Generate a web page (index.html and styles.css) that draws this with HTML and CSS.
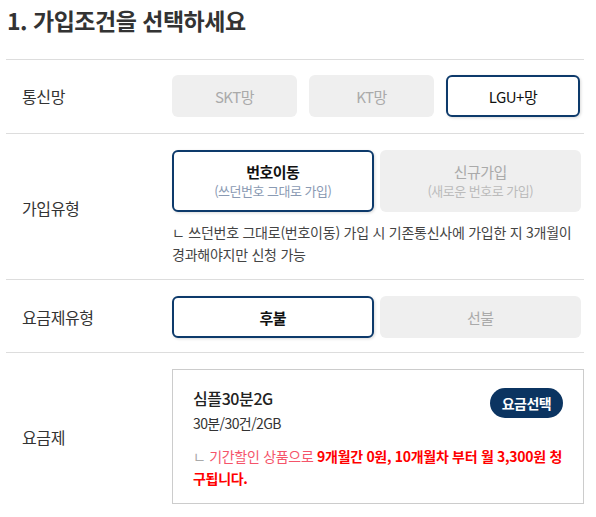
FILE: index.html
```html
<!DOCTYPE html>
<html lang="ko">
<head>
<meta charset="utf-8">
<link rel="stylesheet" href="styles.css">
</head>
<body>
<div class="wrap">
  <h1 class="title">1. 가입조건을 선택하세요</h1>
  <div class="row row-net">
    <div class="label">통신망</div>
    <div class="opts three">
      <div class="btn off">SKT망</div>
      <div class="btn off">KT망</div>
      <div class="btn on">LGU+망</div>
    </div>
  </div>
  <div class="row row-join">
    <div class="label">가입유형</div>
    <div class="col">
      <div class="opts two">
        <div class="btn tall on"><span class="main">번호이동</span><span class="sub">(쓰던번호 그대로 가입)</span></div>
        <div class="btn tall off"><span class="main">신규가입</span><span class="sub">(새로운 번호로 가입)</span></div>
      </div>
      <p class="note">ㄴ 쓰던번호 그대로(번호이동) 가입 시 기존통신사에 가입한 지 3개월이 경과해야지만 신청 가능</p>
    </div>
  </div>
  <div class="row row-type">
    <div class="label">요금제유형</div>
    <div class="opts two">
      <div class="btn on strong">후불</div>
      <div class="btn off">선불</div>
    </div>
  </div>
  <div class="row row-plan">
    <div class="label">요금제</div>
    <div class="card">
      <div class="card-head">
        <div>
          <div class="plan-name">심플30분2G</div>
          <div class="plan-spec">30분/30건/2GB</div>
        </div>
        <div class="pick">요금선택</div>
      </div>
      <p class="promo"><span class="mark">ㄴ </span><span class="soft">기간할인 상품으로 </span><b>9개월간 0원, 10개월차 부터 월 3,300원 청구됩니다.</b></p>
    </div>
  </div>
</div>
</body>
</html>
```

FILE: styles.css
```css
* { box-sizing: border-box; }
html, body { margin: 0; padding: 0; background: #fff; }
body {
  font-family: "Noto Sans CJK KR", "Noto Sans", sans-serif;
  color: #333;
}
.wrap { padding: 0 6px; width: 590px; }
.title {
  margin: 0;
  padding: 4px 0 0 1px;
  height: 59px;
  font-size: 23px;
  font-weight: 700;
  color: #333;
  letter-spacing: -0.5px;
  line-height: 32px;
}
.row {
  display: flex;
  align-items: center;
  border-top: 1px solid #ddd;
}
.label {
  width: 166px;
  flex: none;
  padding-left: 16px;
  font-size: 16px;
  color: #333;
  letter-spacing: -0.4px;
}
.row-net { padding: 15px 0 16px; }
.row-join { padding: 16px 0 14px; }
.row-type { padding: 16px 0 14px; }
.row-plan { padding: 16px 0 14px; }
.opts { display: grid; width: 409px; }
.three { grid-template-columns: 125px 125px 134px; column-gap: 12px; }
.two { grid-template-columns: 1fr 1fr; column-gap: 6px; }
.col { width: 409px; }
.btn {
  height: 42px;
  border-radius: 6px;
  display: flex;
  flex-direction: column;
  align-items: center;
  justify-content: center;
  font-size: 15px;
  letter-spacing: -0.5px;
}
.btn.off { background: #efefef; color: #aaa; }
.btn.on {
  background: #fff;
  border: 2px solid #0d3a6b;
  color: #111;
  box-shadow: 1px 1px 3px rgba(0,0,0,0.15);
}
.btn.strong { font-weight: 700; }
.btn.tall { height: 62px; }
.btn .main { font-size: 15px; line-height: 20px; }
.btn .sub { font-size: 13px; line-height: 18px; }
.btn.on .main { font-weight: 700; color: #111; }
.btn.on .sub { color: #8a9ab3; }
.btn.off .sub { color: #bbb; }
.note {
  margin: 9px 0 0;
  font-size: 14px;
  line-height: 22px;
  color: #444;
  letter-spacing: -0.25px;
}
.card {
  width: 414px;
  border: 1px solid #ccc;
  padding: 17px 20px 14px 20px;
}
.card-head { display: flex; justify-content: space-between; align-items: flex-start; }
.plan-name { font-size: 16px; line-height: 22px; color: #222; font-weight: 500; letter-spacing: -0.4px; }
.plan-spec { margin-top: 4px; font-size: 14px; line-height: 20px; color: #333; letter-spacing: -0.6px; }
.pick {
  margin-top: 1px;
  width: 73px;
  height: 30px;
  border-radius: 15px;
  background: #0b3461;
  color: #fff;
  font-size: 14px;
  font-weight: 700;
  display: flex;
  align-items: center;
  justify-content: center;
  letter-spacing: -0.5px;
}
.promo {
  margin: 12px 0 0;
  font-size: 14px;
  line-height: 22px;
  letter-spacing: -0.3px;
  color: #f00;
}
.promo .mark { color: #aaa; }
.promo .soft { color: #f5546a; }
.promo b { font-weight: 700; color: #f00; }
```
